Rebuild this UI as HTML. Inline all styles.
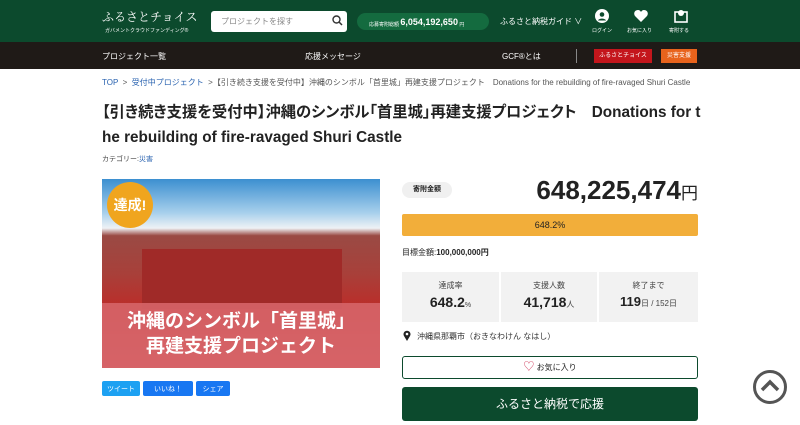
<!DOCTYPE html>
<html><head><meta charset="utf-8"><style>
*{margin:0;padding:0;box-sizing:border-box}
body{width:800px;height:425px;overflow:hidden;background:#fff;font-family:"Liberation Sans","Noto Sans CJK JP",sans-serif;color:#222;position:relative}
.a{position:absolute}
.hdr{left:0;top:0;width:800px;height:42px;background:#0c4a2d}
.nav{left:0;top:42px;width:800px;height:27px;background:#1f1a17;color:#fff;font-size:9px}
.w{color:#fff}
.btn{display:flex;align-items:center;justify-content:center;color:#fff;font-size:7px;border-radius:2px;height:15px;top:381px}
</style></head><body>
<div class="a hdr"></div>
<div class="a w" style="left:102px;top:8px;font-size:12px;font-family:'Noto Serif CJK SC',serif;white-space:nowrap">ふるさとチョイス</div>
<div class="a w" style="left:105px;top:27px;font-size:5px;white-space:nowrap">ガバメントクラウドファンディング®</div>
<div class="a" style="left:211px;top:11px;width:136px;height:21px;background:#fff;border-radius:3px;font-size:8px;color:#888;padding:5px 10px">プロジェクトを探す</div>
<svg class="a" style="left:332px;top:15px" width="11" height="11" viewBox="0 0 11 11"><circle cx="4.5" cy="4.5" r="3.5" fill="none" stroke="#333" stroke-width="1.4"/><path d="M7 7l3 3" stroke="#333" stroke-width="1.5"/></svg>
<div class="a" style="left:357px;top:13px;width:132px;height:17px;background:#146b3f;border-radius:9px;color:#fff;font-size:5px;padding:5px 0 0 12px;white-space:nowrap">応募寄附総額 <b style="font-size:9px;position:relative;top:-1px">6,054,192,650</b> 円</div>
<div class="a w" style="left:500px;top:16px;font-size:8px">ふるさと納税ガイド ∨</div>
<svg class="a" style="left:595px;top:9px" width="14" height="14" viewBox="0 0 14 14"><circle cx="7" cy="7" r="7" fill="#fff"/><circle cx="7" cy="5.5" r="2.3" fill="#0c4a2d"/><path d="M3 11.5c1-2.5 7-2.5 8 0" fill="#0c4a2d"/></svg>
<svg class="a" style="left:634px;top:10px" width="14" height="12" viewBox="0 0 14 12"><path d="M7 12L1 6C-1 3 1 0 4 0c1.5 0 2.5 1 3 2 .5-1 1.5-2 3-2 3 0 5 3 3 6z" fill="#fff"/></svg>
<svg class="a" style="left:674px;top:9px" width="14" height="14" viewBox="0 0 14 14"><rect x="1" y="3" width="12" height="10" fill="none" stroke="#fff" stroke-width="1.6"/><circle cx="7" cy="4" r="3" fill="#fff"/></svg>
<div class="a w" style="left:592px;top:27px;font-size:5px">ログイン</div>
<div class="a w" style="left:627px;top:27px;font-size:5px">お気に入り</div>
<div class="a w" style="left:669px;top:27px;font-size:5px">寄附する</div>
<div class="a nav"></div>
<div class="a w" style="left:102px;top:51px;font-size:8px">プロジェクト一覧</div>
<div class="a w" style="left:305px;top:51px;font-size:8px">応援メッセージ</div>
<div class="a w" style="left:502px;top:51px;font-size:8px">GCF®とは</div>
<div class="a" style="left:576px;top:49px;width:1px;height:14px;background:#888"></div>
<div class="a" style="left:594px;top:49px;width:58px;height:14px;background:#c4161c;color:#fff;font-size:6px;text-align:center;line-height:14px">ふるさとチョイス</div>
<div class="a" style="left:661px;top:49px;width:36px;height:14px;background:#e8631c;color:#fff;font-size:6px;text-align:center;line-height:14px">災害支援</div>
<div class="a" style="left:102px;top:77px;font-size:8px;color:#555;white-space:nowrap"><span style="color:#2a63b0">TOP</span> &nbsp;&gt;&nbsp; <span style="color:#2a63b0">受付中プロジェクト</span> &nbsp;&gt;【引き続き支援を受付中】沖縄のシンボル「首里城」再建支援プロジェクト　Donations for the rebuilding of fire-ravaged Shuri Castle</div>
<div class="a" style="left:102px;top:100px;font-size:15.3px;font-weight:bold;line-height:25px;white-space:nowrap;font-feature-settings:'palt'">【引き続き支援を受付中】沖縄のシンボル「首里城」再建支援プロジェクト　Donations for t<br>he rebuilding of fire-ravaged Shuri Castle</div>
<div class="a" style="left:102px;top:154px;font-size:7px;color:#444">カテゴリー:<span style="color:#2a63b0">災害</span></div>
<div class="a" style="left:102px;top:179px;width:278px;height:189px;background:linear-gradient(#3c8fd0 0%,#a8d0ec 18%,#eef2f5 26%,#9a4a44 30%,#a8403a 50%,#b8302c 65%,#d45a5e 100%);overflow:hidden">
<div class="a" style="left:40px;top:70px;width:200px;height:60px;background:#a02a28"></div>
<div class="a" style="left:0;top:124px;width:278px;height:65px;background:rgba(214,100,104,.9)"></div>
<div class="a" style="left:0;top:130px;width:278px;text-align:center;color:#fff;font-size:19px;font-weight:bold;line-height:25px">沖縄のシンボル「首里城」<br>再建支援プロジェクト</div>
<div class="a" style="left:5px;top:3px;width:46px;height:46px;border-radius:50%;background:#f0a51e;color:#fff;font-weight:bold;font-size:14px;text-align:center;line-height:46px">達成!</div>
</div>
<div class="a btn" style="left:102px;width:38px;background:#1da1f2">ツイート</div>
<div class="a btn" style="left:143px;width:50px;background:#1877f2">いいね！</div>
<div class="a btn" style="left:196px;width:34px;background:#1877f2">シェア</div>
<div class="a" style="left:402px;top:182px;width:50px;height:16px;background:#f0f0f0;border-radius:8px;font-size:7px;font-weight:bold;text-align:center;line-height:16px">寄附金額</div>
<div class="a" style="left:500px;top:175px;width:198px;text-align:right;font-size:26px;font-weight:bold;white-space:nowrap">648,225,474<span style="font-size:17px;font-weight:normal">円</span></div>
<div class="a" style="left:402px;top:214px;width:296px;height:22px;background:#f2ae3a;border-radius:2px;text-align:center;font-size:9px;line-height:22px">648.2%</div>
<div class="a" style="left:402px;top:247px;font-size:8px">目標金額:<b>100,000,000円</b></div>
<div class="a" style="left:402px;top:272px;width:97px;height:50px;background:#f2f2f2;text-align:center;padding-top:8px;font-size:8px;color:#444">達成率<br><b style="font-size:14px;color:#222;line-height:22px">648.2</b><span style="font-size:7px">%</span></div>
<div class="a" style="left:501px;top:272px;width:96px;height:50px;background:#f2f2f2;text-align:center;padding-top:8px;font-size:8px;color:#444">支援人数<br><b style="font-size:14px;color:#222;line-height:22px">41,718</b><span style="font-size:8px">人</span></div>
<div class="a" style="left:599px;top:272px;width:99px;height:50px;background:#f2f2f2;text-align:center;padding-top:8px;font-size:8px;color:#444">終了まで<br><b style="font-size:13px;color:#222;line-height:22px">119</b><span style="font-size:8px">日 / 152日</span></div>
<svg class="a" style="left:403px;top:330px" width="8" height="11" viewBox="0 0 8 11"><path d="M4 11L1 6A3.5 3.5 0 1 1 7 6z" fill="#222"/><circle cx="4" cy="4" r="1.3" fill="#fff"/></svg>
<div class="a" style="left:417px;top:331px;font-size:8px;color:#333">沖縄県那覇市（おきなわけん なはし）</div>
<div class="a" style="left:402px;top:356px;width:296px;height:23px;border:1.5px solid #0c4a2d;border-radius:3px;text-align:center;font-size:8px;line-height:20px"><span style="color:#d04060;font-size:11px">♡</span> お気に入り</div>
<div class="a" style="left:402px;top:387px;width:296px;height:34px;background:#0c4a2d;border-radius:3px;color:#fff;text-align:center;font-size:12px;line-height:34px">ふるさと納税で応援</div>
<svg class="a" style="left:752px;top:369px" width="36" height="36" viewBox="0 0 36 36"><circle cx="18" cy="18" r="15.5" fill="#fff" stroke="#555" stroke-width="3"/><path d="M10 21l8-8 8 8" fill="none" stroke="#555" stroke-width="3.5"/></svg>
</body></html>
